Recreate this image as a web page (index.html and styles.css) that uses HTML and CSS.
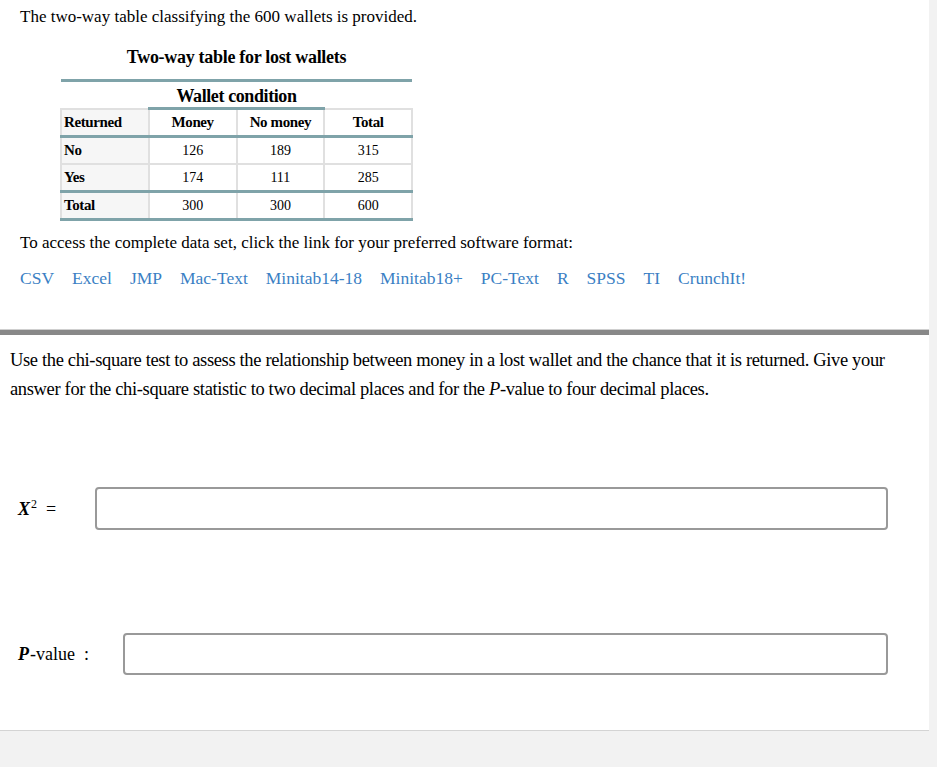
FILE: index.html
```html
<!DOCTYPE html>
<html lang="en">
<head>
    <meta charset="UTF-8">
    <title>Lost wallets - chi-square test</title>
    <link rel="stylesheet" href="styles.css">
</head>
<body>
    <main class="page">
        <section class="intro">
            <p class="intro-text">The two-way table classifying the 600 wallets is provided.</p>

            <table class="wallet-table">
                <caption class="table-caption">Two-way table for lost wallets</caption>
                <thead>
                    <tr class="group-row">
                        <th colspan="4">Wallet condition</th>
                    </tr>
                    <tr class="head-row">
                        <th class="row-head">Returned</th>
                        <th class="marked">Money</th>
                        <th class="marked">No money</th>
                        <th>Total</th>
                    </tr>
                </thead>
                <tbody>
                    <tr class="first-row">
                        <th class="row-head">No</th>
                        <td>126</td>
                        <td>189</td>
                        <td>315</td>
                    </tr>
                    <tr>
                        <th class="row-head">Yes</th>
                        <td>174</td>
                        <td>111</td>
                        <td>285</td>
                    </tr>
                    <tr class="total-row">
                        <th class="row-head">Total</th>
                        <td>300</td>
                        <td>300</td>
                        <td>600</td>
                    </tr>
                </tbody>
            </table>

            <p class="intro-text access-text">To access the complete data set, click the link for your preferred software format:</p>
            <nav class="data-links">
                <a href="#">CSV</a>
                <a href="#">Excel</a>
                <a href="#">JMP</a>
                <a href="#">Mac-Text</a>
                <a href="#">Minitab14-18</a>
                <a href="#">Minitab18+</a>
                <a href="#">PC-Text</a>
                <a href="#">R</a>
                <a href="#">SPSS</a>
                <a href="#">TI</a>
                <a href="#">CrunchIt!</a>
            </nav>
        </section>

        <div class="divider"></div>

        <section class="question">
            <p class="question-text">Use the chi-square test to assess the relationship between money in a lost wallet and the chance that it is returned. Give your answer for the chi-square statistic to two decimal places and for the <i class="var">P</i>-value to four decimal places.</p>

            <div class="answer-row chi-row">
                <label class="answer-label" for="chi-input"><i class="math">X</i><sup>2</sup>&nbsp;&nbsp;=</label>
                <input type="text" id="chi-input" class="answer-input">
            </div>

            <div class="answer-row p-row">
                <label class="answer-label" for="p-input"><i class="math">P</i>-value&nbsp;&nbsp;:</label>
                <input type="text" id="p-input" class="answer-input">
            </div>
        </section>
    </main>
</body>
</html>
```

FILE: styles.css
```css
:root {
    --text-color: #000;
    --link-color: #3b7fc4;
    --teal-rule: #7fa3a9;
    --cell-border: #e0e0e0;
    --page-bg: #f2f2f2;
}

body {
    margin: 0;
    background-color: var(--page-bg);
    font-family: 'Liberation Serif', 'Times New Roman', serif;
    color: var(--text-color);
}

.page {
    width: 929px;
    background: white;
    border-bottom: 1px solid #d4d4d4;
}

.intro {
    padding: 1px 20px 18px;
    height: 310px;
}

.intro-text {
    font-size: 17px;
    margin: 6px 0 0;
    line-height: 20px;
}

.wallet-table {
    margin: 20px 0 0 40px;
    width: 353px;
    border-collapse: collapse;
    font-size: 15px;
}

.table-caption {
    font-weight: bold;
    font-size: 18px;
    letter-spacing: -0.3px;
    padding-bottom: 11px;
}

.wallet-table th,
.wallet-table td {
    border: 2px solid var(--cell-border);
    height: 25px;
    padding: 0 4px;
    text-align: center;
}

.wallet-table td {
    font-size: 14px;
}

.wallet-table th {
    letter-spacing: -0.4px;
}

.group-row th {
    border: none;
    border-top: 3px solid var(--teal-rule);
    font-size: 18px;
    height: 22px;
    padding-top: 3px;
}

.head-row th {
    width: 25%;
}

.head-row .marked {
    border-top: 3px solid var(--teal-rule);
}

.wallet-table .row-head {
    text-align: left;
    padding-left: 2px;
    background: #f6f6f6;
}

.first-row th,
.first-row td,
.total-row th,
.total-row td {
    border-top: 3px solid var(--teal-rule);
}

.total-row th,
.total-row td {
    border-bottom: 3px solid var(--teal-rule);
}

.access-text {
    margin-top: 12px;
}

.data-links {
    display: flex;
    gap: 18px;
    margin-top: 15px;
    font-size: 17.5px;
}

.data-links a {
    color: var(--link-color);
    text-decoration: none;
}

.divider {
    height: 5px;
    background: #888;
    border-top: 1px solid #cfcfcf;
}

.question {
    padding: 11px 10px 0;
    height: 384px;
}

.question-text {
    margin: 0;
    font-size: 18.5px;
    line-height: 29px;
    letter-spacing: -0.35px;
}

.answer-row {
    display: flex;
    align-items: center;
    padding-left: 8px;
}

.chi-row {
    margin-top: 83px;
}

.p-row {
    margin-top: 103px;
}

.answer-label {
    font-size: 18px;
    white-space: nowrap;
}

.chi-row .answer-label {
    width: 77px;
}

.p-row .answer-label {
    width: 105px;
}

.math {
    font-weight: bold;
    padding-right: 1px;
}

sup {
    font-size: 12px;
}

.answer-input {
    flex: 0 0 auto;
    box-sizing: border-box;
    height: 43px;
    border: 2px solid #999;
    border-radius: 4px;
    background: white;
}

.chi-row .answer-input {
    width: 793px;
}

.p-row .answer-input {
    width: 765px;
    height: 42px;
}
```
